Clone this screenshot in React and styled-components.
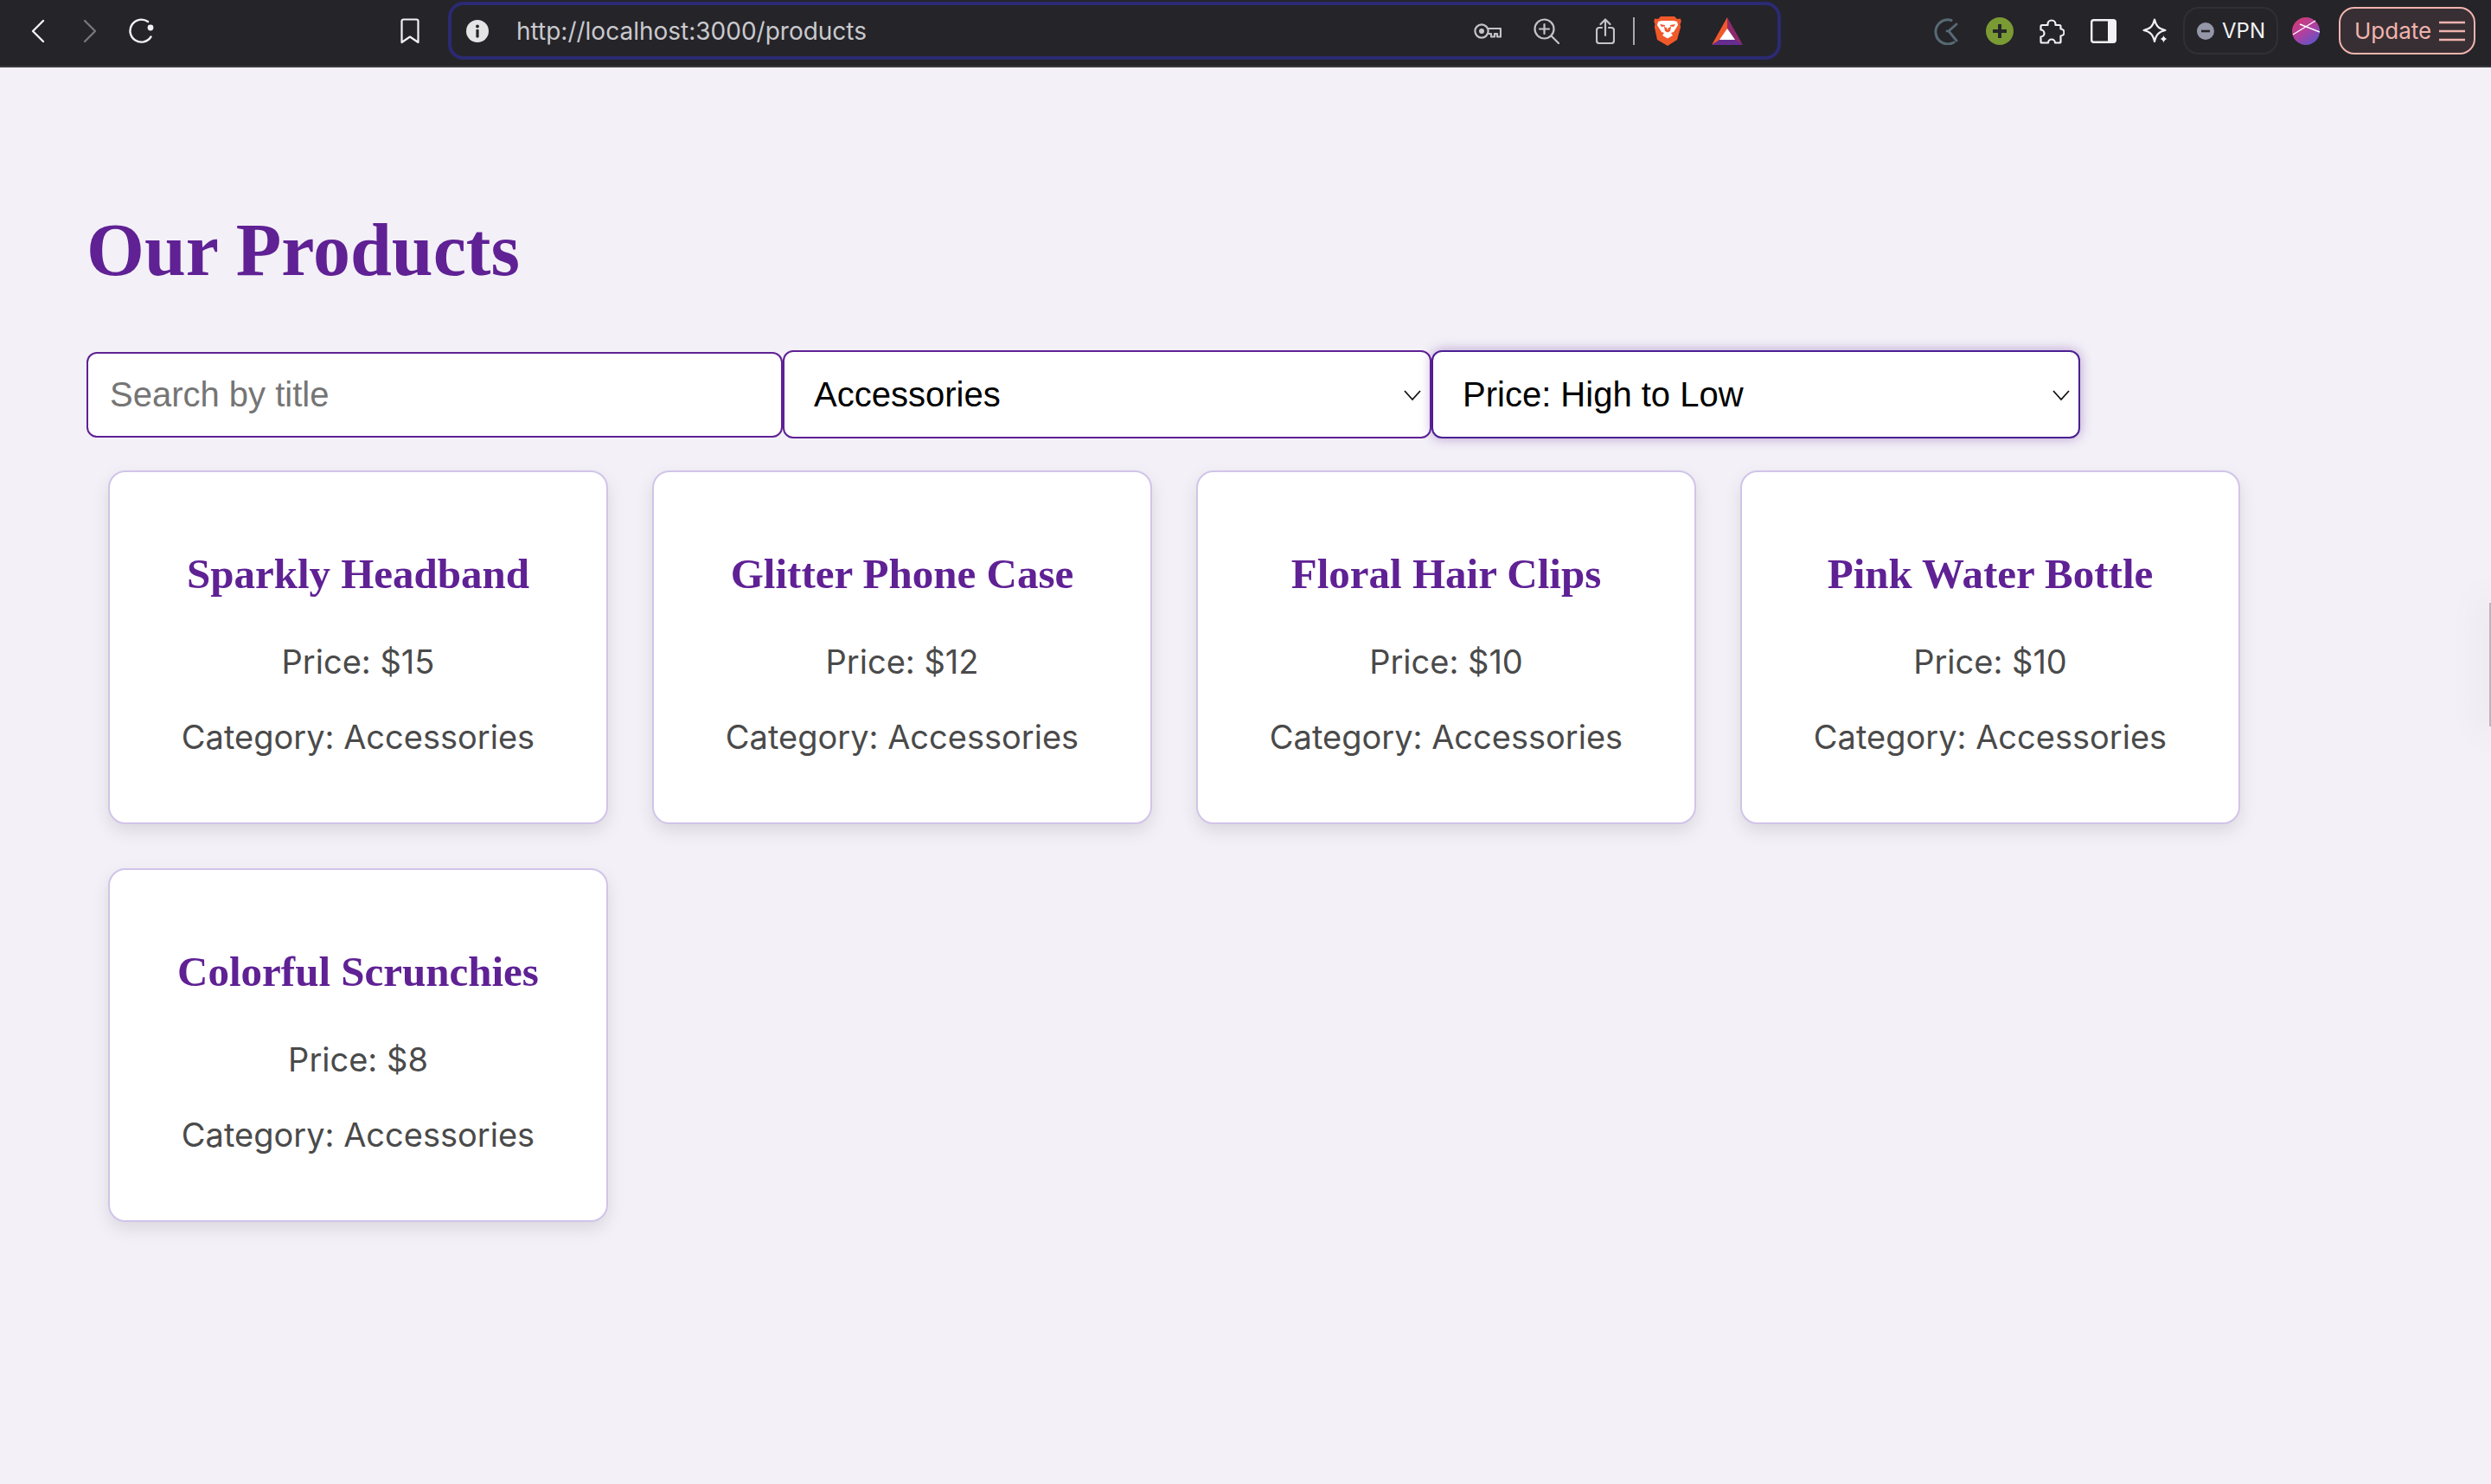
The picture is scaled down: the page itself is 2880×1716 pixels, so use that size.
import React from "react";
import styled, { createGlobalStyle } from "styled-components";

const products = [
  { title: "Sparkly Headband", price: 15 },
  { title: "Glitter Phone Case", price: 12 },
  { title: "Floral Hair Clips", price: 10 },
  { title: "Pink Water Bottle", price: 10 },
  { title: "Colorful Scrunchies", price: 8 },
];

const App = () => {
  return (
    <>
      <GlobalStyle />
      <Toolbar>
        <Slot $gap={0} $w={16}>
          <svg width="16" height="28" viewBox="0 0 16 28" fill="none" stroke="#f2f2f4" strokeWidth="2.4" strokeLinecap="round" strokeLinejoin="round">
            <path d="M14 2 2 14l12 12" />
          </svg>
        </Slot>
        <Slot $gap={44} $w={16}>
          <svg width="16" height="28" viewBox="0 0 16 28" fill="none" stroke="#77767b" strokeWidth="2.4" strokeLinecap="round" strokeLinejoin="round">
            <path d="M2 2l12 12L2 26" />
          </svg>
        </Slot>
        <Slot $gap={37} $w={30}>
          <svg width="30" height="30" viewBox="0 0 30 30" fill="none" stroke="#f2f2f4" strokeWidth="2.4" strokeLinecap="round">
            <path d="M25.5 21.5A13 13 0 1 1 22 4" />
            <circle cx="25" cy="11" r="3.4" fill="#f2f2f4" stroke="none" />
          </svg>
        </Slot>
        <Slot $gap={284} $w={22}>
          <svg width="22" height="30" viewBox="0 0 22 30" fill="none" stroke="#f2f2f4" strokeWidth="2.2" strokeLinejoin="round">
            <path d="M3.5 1.5h15a2 2 0 0 1 2 2V28L11 21.5 1.5 28V3.5a2 2 0 0 1 2-2Z" />
          </svg>
        </Slot>
        <AddressBar>
          <Slot $gap={17} $w={26}>
            <svg width="26" height="26" viewBox="0 0 26 26">
              <circle cx="13" cy="13" r="13" fill="#e4e4e7" />
              <circle cx="13" cy="7.5" r="1.9" fill="#252429" />
              <rect x="11.4" y="11" width="3.2" height="9.5" rx="0.8" fill="#252429" />
            </svg>
          </Slot>
          <UrlText>http://localhost:3000/products</UrlText>
          <PushRight />
          <Slot $gap={0} $w={32}>
            <svg width="32" height="18" viewBox="0 0 32 18" fill="none" stroke="#c4c4c8" strokeWidth="2.2" strokeLinejoin="round">
              <circle cx="9" cy="9" r="7.6" />
              <circle cx="9" cy="9" r="3" fill="#c4c4c8" stroke="none" />
              <path d="M16.5 6H31v9.5h-4V12h-3v3.5h-4V12h-3.5" />
            </svg>
          </Slot>
          <Slot $gap={37} $w={30}>
            <svg width="30" height="30" viewBox="0 0 30 30" fill="none" stroke="#c4c4c8" strokeWidth="2.2" strokeLinecap="round">
              <circle cx="12.5" cy="12.5" r="11" />
              <path d="M12.5 7v11M7 12.5h11M21 21l8 8" />
            </svg>
          </Slot>
          <Slot $gap={42} $w={22}>
            <svg width="22" height="30" viewBox="0 0 22 30" fill="none" stroke="#c4c4c8" strokeWidth="2.2" strokeLinecap="round" strokeLinejoin="round">
              <path d="M11 20V2M5.5 7 11 1.5 16.5 7" />
              <path d="M7 11H4a3 3 0 0 0-3 3v12a3 3 0 0 0 3 3h14a3 3 0 0 0 3-3V14a3 3 0 0 0-3-3h-3" />
            </svg>
          </Slot>
          <Separator />
          <Slot $gap={22} $w={32}>
            <svg width="32" height="36" viewBox="0 0 32 36">
              <path d="M8 1h16l3 3 4-.5.8 3.500-1.300 3 .7 3-4.200 15L16 35 4 28 .8 13l.7-3L.2 7 1 3.500 5 4Z" fill="#f1582a" />
              <path d="M9 6h14l4 1 1 4-5 8-3 1 2 3-6 3.500L10 23l2-3-3-1-5-8 1-4Z" fill="#fff" />
              <path d="M12 13l3 1 1 3 1-3 3-1-1 5-3 1.500-3-1.500Z" fill="#f1582a" />
              <path d="M7 10l6 1v1.500L9 13ZM25 10l-6 1v1.500l4 .5Z" fill="#f1582a" />
            </svg>
          </Slot>
          <Slot $gap={35} $w={36}>
            <svg width="36" height="32" viewBox="0 0 36 32">
              <path d="M18 0 0 32l18-11Z" fill="#f1582a" />
              <path d="M18 0l18 32-18-11Z" fill="#8e2a6c" />
              <path d="M0 32h36L27 26H9Z" fill="#662d91" />
              <path d="M18 13l9 13H9Z" fill="#fff" />
            </svg>
          </Slot>
        </AddressBar>
        <RightGroup>
          <Slot $gap={0} $w={30}>
            <svg width="30" height="32" viewBox="0 0 30 32" fill="none" stroke="#566a74" strokeWidth="3" strokeLinecap="round">
              <path d="M21 3.500A14 14 0 1 0 24 29" />
              <path d="M27 8l-9 8 9 11" />
              <circle cx="16" cy="16" r="1.400" fill="#566a74" stroke="none" />
            </svg>
          </Slot>
          <Slot $gap={31} $w={32}>
            <svg width="32" height="32" viewBox="0 0 32 32">
              <circle cx="16" cy="16" r="16" fill="#7a9a33" />
              <path d="M16 8v16M8 16h16" stroke="#25282a" strokeWidth="4" />
            </svg>
          </Slot>
          <Slot $gap={29} $w={30}>
            <svg width="30" height="30" viewBox="0 0 30 30" fill="none" stroke="#f2f2f4" strokeWidth="2.2" strokeLinejoin="round">
              <path d="M10.500 7a4.500 4.500 0 1 1 9 0v1H24a1.500 1.500 0 0 1 1.500 1.500V12.500a4 4 0 0 1 0 8V27a1.500 1.500 0 0 1-1.500 1.500h-5a4 4 0 0 0-8 0H4A1.500 1.500 0 0 1 2.500 27v-5.500a4 4 0 0 0 0-8V9.500A1.500 1.500 0 0 1 4 8h6.500Z" />
            </svg>
          </Slot>
          <Slot $gap={30} $w={30}>
            <svg width="30" height="28" viewBox="0 0 30 28">
              <rect x="1.200" y="1.200" width="27.600" height="25.600" rx="2.500" fill="none" stroke="#f2f2f4" strokeWidth="2.400" />
              <rect x="20" y="1" width="9" height="26" rx="2" fill="#f2f2f4" />
            </svg>
          </Slot>
          <Slot $gap={30} $w={30}>
            <svg width="30" height="30" viewBox="0 0 30 30" fill="none" stroke="#f2f2f4" strokeWidth="2.200" strokeLinejoin="round">
              <path d="M14 1.500c1.700 7.500 4.800 10.800 12.500 12.500-7.700 1.700-10.800 5-12.500 13-1.700-8-4.800-11.300-12.500-13C9.200 12.300 12.300 9 14 1.500Z" />
              <path d="M24.500 18.500c.7 3.500 2 4.800 5.500 5.500-3.500.7-4.800 2-5.500 6-.7-4-2-5.300-5.500-6 3.500-.7 4.800-2 5.500-5.500Z" fill="#f2f2f4" stroke="#252429" strokeWidth="1" />
            </svg>
          </Slot>
          <VpnPill>
            <svg width="20" height="20" viewBox="0 0 20 20">
              <circle cx="10" cy="10" r="10" fill="#9497a8" />
              <rect x="5" y="8.700" width="10" height="2.600" fill="#252429" />
            </svg>
            VPN
          </VpnPill>
          <Slot $gap={16} $w={32}>
            <svg width="32" height="32" viewBox="0 0 32 32">
              <defs>
                <linearGradient id="avatar" x1="0.100" y1="0" x2="0.800" y2="1">
                  <stop offset="0" stopColor="#d23a6e" />
                  <stop offset="0.500" stopColor="#b33f9f" />
                  <stop offset="1" stopColor="#5a55c9" />
                </linearGradient>
              </defs>
              <circle cx="16" cy="16" r="16" fill="url(#avatar)" />
              <path d="M1 20 27 4M9 8l23 9" stroke="#fff" strokeWidth="1.400" />
            </svg>
          </Slot>
          <UpdateButton>
            Update
            <svg width="30" height="24" viewBox="0 0 30 24" stroke="#f0b3ae" strokeWidth="2.600">
              <path d="M0 2h30M0 12h30M0 22h30" />
            </svg>
          </UpdateButton>
        </RightGroup>
      </Toolbar>
      <Main>
        <Heading>Our Products</Heading>
        <Filters>
          <SearchInput placeholder="Search by title" />
          <SelectWrap>
            <FilterSelect defaultValue="Accessories">
              <option>All Categories</option>
              <option>Accessories</option>
            </FilterSelect>
            <Chevron viewBox="0 0 20 14">
              <path d="M1 2l9 10 9-10" />
            </Chevron>
          </SelectWrap>
          <SelectWrap>
            <FilterSelect defaultValue="Price: High to Low" $focused>
              <option>Price: Low to High</option>
              <option>Price: High to Low</option>
            </FilterSelect>
            <Chevron viewBox="0 0 20 14">
              <path d="M1 2l9 10 9-10" />
            </Chevron>
          </SelectWrap>
        </Filters>
        <ProductGrid>
          {products.map((product) => (
            <Card key={product.title}>
              <CardTitle>{product.title}</CardTitle>
              <CardText>Price: ${product.price}</CardText>
              <CardText>Category: Accessories</CardText>
            </Card>
          ))}
        </ProductGrid>
      </Main>
      <EdgeTab />
    </>
  );
};

const GlobalStyle = createGlobalStyle`
  html, body {
    margin: 0;
    padding: 0;
    background: #f3f0f7;
  }

  body {
    min-height: 100vh;
    overflow: hidden;
    font-family: "Inter", sans-serif;
  }
`;

const Toolbar = styled.header`
  display: flex;
  align-items: center;
  box-sizing: border-box;
  height: 78px;
  padding: 0 18px 5px 36px;
  background: #252429;
  border-bottom: 2px solid #38383c;
`;

const Slot = styled.span`
  display: flex;
  flex: none;
  align-items: center;
  justify-content: center;
  width: ${(p) => p.$w}px;
  margin-left: ${(p) => p.$gap}px;
`;

const AddressBar = styled.div`
  display: flex;
  align-items: center;
  box-sizing: border-box;
  width: 1541px;
  height: 67px;
  margin-left: 33px;
  padding-right: 40px;
  border: 4px solid #2b2a72;
  border-radius: 18px;
`;

const UrlText = styled.span`
  margin-left: 32px;
  color: #c9c9cd;
  font-size: 28px;
  line-height: 1;
`;

const PushRight = styled.span`
  flex: 1;
`;

const Separator = styled.span`
  flex: none;
  width: 2px;
  height: 32px;
  margin-left: 21px;
  background: #a9a9ad;
`;

const RightGroup = styled.div`
  display: flex;
  align-items: center;
  margin-left: auto;
`;

const VpnPill = styled.div`
  display: flex;
  align-items: center;
  gap: 9px;
  box-sizing: border-box;
  width: 110px;
  height: 55px;
  margin-left: 17px;
  padding-left: 14px;
  border: 2px solid #303035;
  border-radius: 18px;
  color: #f2f2f4;
  font-size: 24px;
`;

const UpdateButton = styled.div`
  display: flex;
  align-items: center;
  gap: 9px;
  box-sizing: border-box;
  width: 158px;
  height: 55px;
  margin-left: 22px;
  padding-left: 16px;
  border: 2px solid #f0b3ae;
  border-radius: 18px;
  background: #372f33;
  color: #f0b3ae;
  font-size: 26px;
`;

const Main = styled.main`
  padding: 0 100px;
`;

const Heading = styled.h1`
  margin: 0;
  padding-top: 161px;
  color: #5f2194;
  font-family: "Liberation Serif", serif;
  font-size: 86px;
  font-weight: 700;
  line-height: 100px;
`;

const Filters = styled.div`
  display: flex;
  align-items: center;
  margin-top: 66px;
`;

const SearchInput = styled.input`
  flex: none;
  box-sizing: border-box;
  width: 805px;
  height: 99px;
  padding: 0 25px;
  border: 2px solid #5f2194;
  border-radius: 12px;
  background: #fff;
  font-family: "Liberation Sans", sans-serif;
  font-size: 40px;
  outline: none;

  &::placeholder {
    color: #757575;
  }
`;

const SelectWrap = styled.div`
  position: relative;
  flex: none;
  width: 750px;
  height: 102px;
`;

const FilterSelect = styled.select`
  box-sizing: border-box;
  width: 100%;
  height: 100%;
  padding: 0 34px;
  border: 2px solid ${(p) => (p.$focused ? "#4a1f92" : "#5f2194")};
  border-radius: 12px;
  background: #fff;
  color: #000;
  font-family: "Liberation Sans", sans-serif;
  font-size: 40px;
  appearance: none;
  outline: none;
  box-shadow: ${(p) => (p.$focused ? "0 0 14px rgba(95, 33, 148, 0.4)" : "none")};
`;

const Chevron = styled.svg`
  position: absolute;
  top: 45px;
  right: 12px;
  width: 20px;
  height: 14px;
  fill: none;
  stroke: #111;
  stroke-width: 1.8;
  pointer-events: none;
`;

const ProductGrid = styled.div`
  display: grid;
  grid-template-columns: repeat(4, 578px);
  column-gap: 51px;
  row-gap: 51px;
  margin-top: 37px;
  padding-left: 25px;
`;

const Card = styled.article`
  display: flex;
  flex-direction: column;
  align-items: center;
  box-sizing: border-box;
  height: 409px;
  padding-top: 86px;
  border: 2px solid #d1c4e9;
  border-radius: 20px;
  background: #fff;
  box-shadow: 0 8px 20px rgba(0, 0, 0, 0.1);
`;

const CardTitle = styled.h3`
  margin: 0 0 45px;
  color: #5f2194;
  font-family: "Liberation Serif", serif;
  font-size: 49px;
  font-weight: 700;
  line-height: 64px;
`;

const CardText = styled.p`
  margin: 0 0 39px;
  color: #4a4a4a;
  font-size: 38px;
  line-height: 48px;
`;

const EdgeTab = styled.div`
  position: fixed;
  top: 697px;
  right: 0;
  width: 2px;
  height: 143px;
  background: #b8b6bc;
  box-shadow: 0 0 40px 10px rgba(0, 0, 0, 0.05);
`;

export default App;
